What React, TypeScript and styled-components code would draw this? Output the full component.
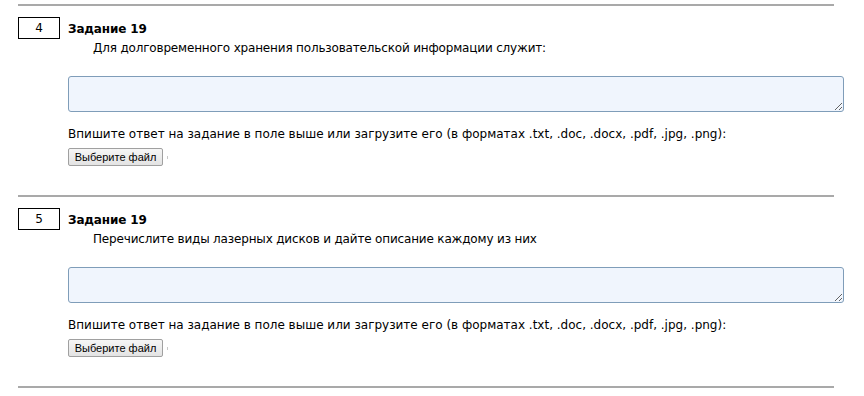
import React from "react";
import styled, { createGlobalStyle } from "styled-components";

const Global = createGlobalStyle`
  html, body { margin: 0; padding: 0; background: #fff; }
  body { font-family: "DejaVu Sans", Verdana, sans-serif; font-size: 12px; color: #000; }
`;

const Page = styled.div`
  padding: 4px 0 0 18px;
  width: 816px;
`;

const Task = styled.section`
  border-top: 2px solid #a9a9a9;
  height: 189px;
  display: flex;
  flex-direction: column;
`;

const LastRule = styled.div`
  border-top: 2px solid #a9a9a9;
`;

const Header = styled.div`
  display: flex;
  align-items: flex-start;
  margin-top: 11px;
  gap: 8px;
`;

const NumBox = styled.div`
  box-sizing: border-box;
  width: 42px;
  height: 22px;
  border: 1px solid #000;
  display: flex;
  align-items: center;
  justify-content: center;
  font-size: 12px;
`;

const Title = styled.div`
  font-weight: bold;
  font-size: 12px;
  line-height: 16px;
  padding-top: 4px;
  letter-spacing: -0.15px;
`;

const Body = styled.div`
  margin-left: 50px;
  display: flex;
  flex-direction: column;
  align-items: flex-start;
`;

const Question = styled.div`
  padding-left: 25px;
  line-height: 16px;
  margin-top: 1px;
  letter-spacing: -0.17px;
`;

const Answer = styled.textarea`
  box-sizing: border-box;
  width: 776px;
  height: 36px;
  margin: 20px 0 0 0;
  border: 1px solid #7f9db9;
  border-radius: 3px;
  background: #f0f5fd;
  resize: vertical;
  font-family: inherit;
`;

const Hint = styled.div`
  margin-top: 14px;
  line-height: 16px;
`;

const FileRow = styled.div`
  display: flex;
  align-items: center;
  margin-top: 6px;
  gap: 4px;
`;

const FileButton = styled.button`
  box-sizing: border-box;
  width: 95px;
  height: 18px;
  padding: 0;
  font-family: "Liberation Sans", Arial, sans-serif;
  font-size: 11px;
  color: #000;
  background: linear-gradient(#f6f6f6, #e3e3e3);
  border: 1px solid #a0a0a0;
  border-radius: 2px;
`;

const Tick = styled.span`
  width: 1px;
  height: 3px;
  background: #c8c8c8;
`;

const tasks = [
  { n: 4, q: "Для долговременного хранения пользовательской информации служит:" },
  { n: 5, q: "Перечислите виды лазерных дисков и дайте описание каждому из них" },
];

export default function App() {
  return (
    <>
      <Global />
      <Page>
        {tasks.map((t) => (
          <Task key={t.n}>
            <Header>
              <NumBox>{t.n}</NumBox>
              <Title>Задание 19</Title>
            </Header>
            <Body>
              <Question>{t.q}</Question>
              <Answer />
              <Hint>
                Впишите ответ на задание в поле выше или загрузите его (в форматах .txt, .doc, .docx, .pdf, .jpg, .png):
              </Hint>
              <FileRow>
                <FileButton>Выберите файл</FileButton>
                <Tick />
              </FileRow>
            </Body>
          </Task>
        ))}
        <LastRule />
      </Page>
    </>
  );
}
